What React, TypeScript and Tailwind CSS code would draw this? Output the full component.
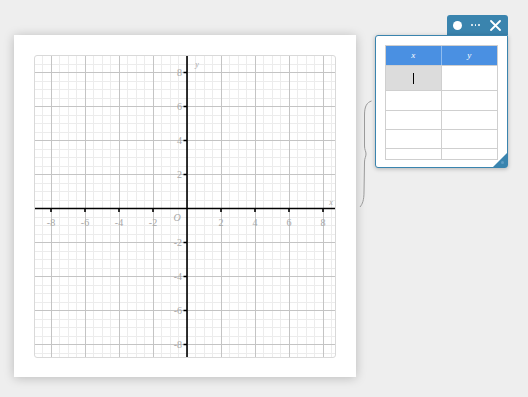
import React from "react";

const W = 302;
const H = 303;
const OX = 152;
const OY = 152.5;
const S = 17;

function Graph() {
  const minorX: number[] = [];
  const majorX: number[] = [];
  for (let k = -18; k <= 18; k++) {
    const v = k / 2;
    const x = OX + v * S;
    if (x < 0 || x > W) continue;
    if (k % 4 === 0) majorX.push(x);
    else minorX.push(x);
  }
  const minorY: number[] = [];
  const majorY: number[] = [];
  for (let k = -18; k <= 18; k++) {
    const v = k / 2;
    const y = OY - v * S;
    if (y < 0 || y > H) continue;
    if (k % 4 === 0) majorY.push(y);
    else minorY.push(y);
  }
  const ticks = [-8, -6, -4, -2, 2, 4, 6, 8];
  const font = "'Liberation Serif', 'DejaVu Serif', serif";
  return (
    <svg width={W} height={H} viewBox={`0 0 ${W} ${H}`} className="block">
      <g stroke="#ececec" strokeWidth={1} shapeRendering="crispEdges">
        {minorX.map((x) => (
          <line key={"mx" + x} x1={x} y1={0} x2={x} y2={H} />
        ))}
        {minorY.map((y) => (
          <line key={"my" + y} x1={0} y1={y} x2={W} y2={y} />
        ))}
      </g>
      <g stroke="#c4c4c4" strokeWidth={1} shapeRendering="crispEdges">
        {majorX.map((x) => (
          <line key={"Mx" + x} x1={x} y1={0} x2={x} y2={H} />
        ))}
        {majorY.map((y) => (
          <line key={"My" + y} x1={0} y1={y} x2={W} y2={y} />
        ))}
      </g>
      <g stroke="#000" strokeWidth={1.6}>
        <line x1={0} y1={OY} x2={W} y2={OY} />
        <line x1={OX} y1={0} x2={OX} y2={H} />
        {ticks.map((t) => (
          <line key={"tx" + t} x1={OX + t * S} y1={OY} x2={OX + t * S} y2={OY + 3.5} />
        ))}
        {ticks.map((t) => (
          <line key={"ty" + t} x1={OX - 3.5} y1={OY - t * S} x2={OX} y2={OY - t * S} />
        ))}
      </g>
      <g fill="#a8a8a8" fontFamily={font} fontSize={10}>
        {ticks.map((t) => (
          <text key={"lx" + t} x={OX + t * S} y={OY + 17} textAnchor="middle">
            {t < 0 ? "-" + -t : String(t)}
          </text>
        ))}
        {ticks.map((t) => (
          <text key={"ly" + t} x={OX - 5} y={OY - t * S + 3.5} textAnchor="end">
            {t < 0 ? "-" + -t : String(t)}
          </text>
        ))}
        <text x={OX - 10} y={OY + 12} fontStyle="italic" textAnchor="middle">
          O
        </text>
        <text x={296} y={OY - 4} fontStyle="italic" fontSize={8} textAnchor="middle">
          x
        </text>
        <text x={OX + 10} y={11} fontStyle="italic" fontSize={8} textAnchor="middle">
          y
        </text>
      </g>
    </svg>
  );
}

function Brace() {
  return (
    <svg width={14} height={108} viewBox="0 0 14 108" className="block">
      <path
        d="M12.5 1 C8 2.5 5.5 6 5.5 15 L5.5 46 C5.5 50 7 51 7 54 C7 57 5.5 58 5.5 62 L5 92 C5 100 3.5 104 1 107"
        fill="none"
        stroke="#9a9a9a"
        strokeWidth={1}
      />
    </svg>
  );
}

function Toolbar() {
  return (
    <div className="flex h-[20px] w-[61px] items-center rounded-t-[3px] bg-[#3a84ae] pl-[6px] pr-[4px]">
      <div className="h-[9px] w-[9px] rounded-full bg-white" />
      <div className="ml-[9px] flex items-center gap-[2px]">
        <div className="h-[1.5px] w-[1.5px] rounded-full bg-white" />
        <div className="h-[1.5px] w-[1.5px] rounded-full bg-white" />
        <div className="h-[1.5px] w-[1.5px] rounded-full bg-white" />
      </div>
      <svg width={11} height={11} viewBox="0 0 11 11" className="ml-auto mr-[3px] block">
        <path d="M1 1 L10 10 M10 1 L1 10" stroke="#fff" strokeWidth={1.8} strokeLinecap="round" />
      </svg>
    </div>
  );
}

function TablePanel() {
  const rowH = ["h-[20px]", "h-[19px]", "h-[19px]", "h-[19px]"];
  return (
    <div className="relative h-[133px] w-[133px] rounded-[3px] rounded-tr-none border border-[#3a84ae] bg-white p-[9px] shadow-[0_1px_4px_rgba(0,0,0,0.25)]">
      <div className="h-[115px] overflow-hidden border border-[#cfcfcf] border-b-[#cfcfcf]">
        <div className="grid h-[19px] grid-cols-2 bg-[#4a90e2] text-[9px] italic text-white" style={{ fontFamily: "'Liberation Serif', serif" }}>
          <div className="flex items-center justify-center border-r border-[#8fbcef]">x</div>
          <div className="flex items-center justify-center">y</div>
        </div>
        <div className="grid h-[25px] grid-cols-2 border-t border-[#cfcfcf]">
          <div className="flex items-center justify-center border-r border-[#cfcfcf] bg-[#dcdcdc]">
            <div className="h-[11px] w-[1px] bg-black" />
          </div>
          <div />
        </div>
        {rowH.map((h, i) => (
          <div key={i} className={`grid ${h} grid-cols-2 border-t border-[#cfcfcf]`}>
            <div className="border-r border-[#cfcfcf]" />
            <div />
          </div>
        ))}
      </div>
      <div className="absolute bottom-0 right-0 h-0 w-0 border-b-[14px] border-l-[14px] border-b-[#3a84ae] border-l-transparent" />
      <div className="absolute bottom-[3px] right-[3px] h-[3px] w-[3px] rounded-full bg-[#5f9cc2]" />
    </div>
  );
}

export default function App() {
  return (
    <div className="flex h-[397px] w-[528px] items-start overflow-hidden bg-[#eeeeee]">
      <div className="ml-[14px] mt-[35px] h-[342px] w-[342px] shrink-0 bg-white p-[20px] pb-[19px] shadow-[0_1px_10px_rgba(0,0,0,0.22)]">
        <div className="h-[303px] w-[302px] overflow-hidden rounded-[3px] border border-[#d9d9d9] bg-white">
          <Graph />
        </div>
      </div>
      <div className="ml-[3px] mt-[100px] shrink-0">
        <Brace />
      </div>
      <div className="ml-[2px] mt-[15px] flex shrink-0 flex-col items-end">
        <Toolbar />
        <TablePanel />
      </div>
    </div>
  );
}
